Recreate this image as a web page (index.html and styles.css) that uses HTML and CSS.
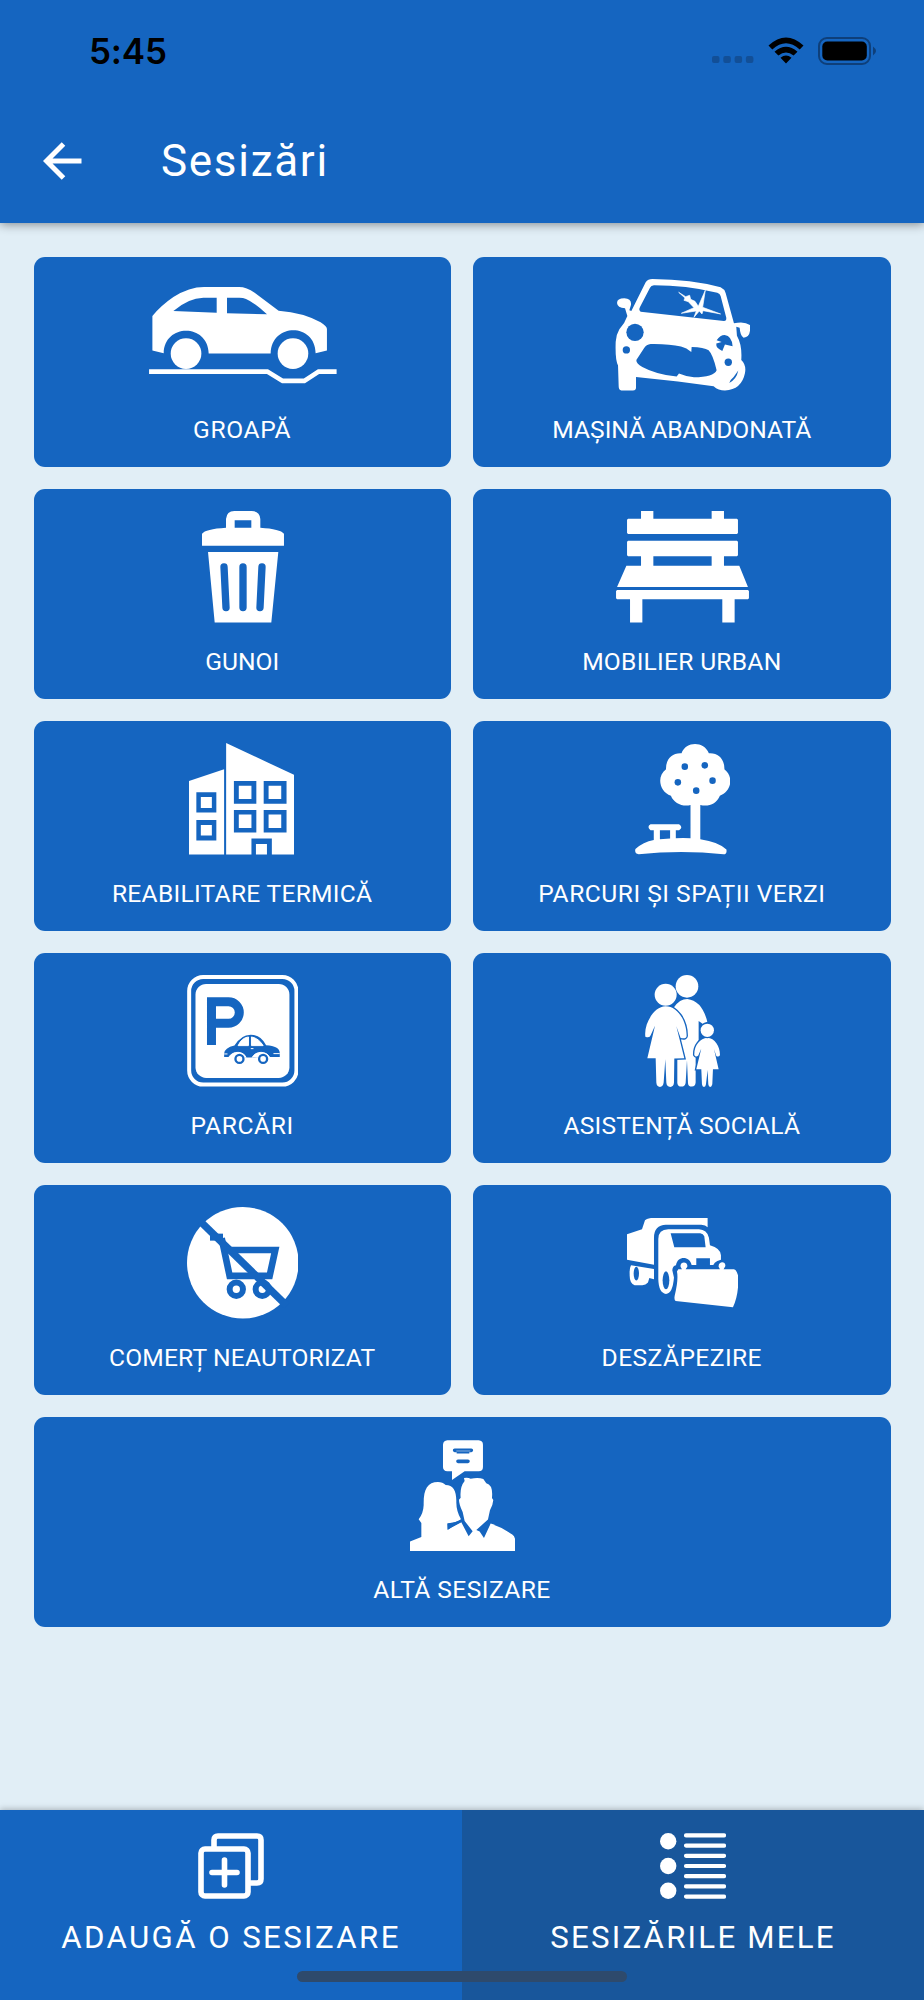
FILE: index.html
```html
<!DOCTYPE html>
<html lang="ro">
<head>
  <meta charset="UTF-8">
  <meta name="viewport" content="width=device-width, initial-scale=1.0">
  <title>Sesizări</title>
  <link rel="stylesheet" href="styles.css">
</head>
<body>
  <header class="header">
    <div class="status-bar">
      <span class="time">5:45</span>
      <div class="status-icons">
        <svg class="signal" viewBox="0 0 42 7"><g fill="#124f97"><rect width="7.5" height="7" rx="2"/><rect x="11.3" width="7.5" height="7" rx="2"/><rect x="22.6" width="7.5" height="7" rx="2"/><rect x="33.9" width="7.5" height="7" rx="2"/></g></svg>
        <svg class="wifi" viewBox="0 0 36 27"><path d="M0.5 8.6Q18-7.6 35.5 8.6L31.7 12.5Q18-0.2 4.3 12.5ZM6.5 14.7Q18 4.6 29.5 14.7L25.6 18.6Q18 12.2 10.4 18.6ZM12.5 20.7Q18 16.2 23.5 20.7L18 26.5Z"/></svg>
        <svg class="battery" viewBox="0 0 59 28"><rect x="1" y="1" width="51" height="26" rx="8" fill="none" stroke="#0e3f7a" stroke-width="2"/><rect x="4.3" y="4.5" width="44.5" height="19" rx="5"/><path d="M55 9.5q6 4.5 0 9z" fill="#0e3f7a"/></svg>
      </div>
    </div>
    <div class="nav-bar">
      <svg class="back" viewBox="0 0 40 38"><path d="M38.5 19H4M20.5 2L3.5 19l17 17" fill="none" stroke="#fff" stroke-width="5"/></svg>
      <h1 class="title">Sesizări</h1>
    </div>
  </header>

  <main class="grid">
    <!-- Pothole -->
    <a class="card">
      <svg class="icon" width="188" viewBox="385 102 564 335">
        <path fill-rule="evenodd" d="M395 317V213Q420 182 458 156Q506 126 550 126H655Q678 126 702 143L774 197Q850 203 900 232Q919 244 919 252V317L885 325C884 233 752 233 750 326H564C562 234 430 235 429 325ZM458 198L588 203V158H548Q503 159 458 198ZM619 158V205L739 208Q700 172 676 162Q668 158 656 158Z"/>
        <circle cx="496" cy="326" r="46"/><circle cx="817" cy="326" r="46"/>
        <path d="M385 380H740L786 408H851L894 380H948" fill="none" stroke="#fff" stroke-width="14"/>
      </svg>
      <span class="label l1">GROAPĂ</span>
    </a>
    <!-- Wrecked car -->
    <a class="card">
      <svg class="icon" width="135.3" viewBox="448 102 406 335">
        <path d="M540 112Q547 102 560 102Q680 103 765 127Q776 132 780 144L805 235Q836 228 853 240Q857 276 834 278Q824 273 822 248L812 245L814 272Q830 300 827 345Q843 360 838 385Q828 434 778 437Q758 437 744 424L637 410L511 396V430Q510 437 502 437H467Q459 436 459 425L457 362Q448 345 450 290Q451 270 461 253Q478 234 485 213L478 190Q455 188 454 174Q454 160 476 160Q498 161 496 179L491 196L497 198Z"/>
        <g fill="#1565c0">
          <path d="M553 128Q556 122 565 121Q660 121 755 143Q763 145 765 153L782 218Q783 228 775 228L525 200Q518 196 523 186Z"/>
          <circle cx="508" cy="262" r="26"/><circle cx="482" cy="315" r="11"/><circle cx="788" cy="352" r="11"/>
          <path d="M512 345L535 310Q542 298 555 297Q610 296 646 305Q663 309 677 321L678 306Q715 307 729 316Q742 329 753 376Q744 397 685 397Q660 395 640 386L633 395Q570 388 530 366Q511 355 512 345ZM753 286Q764 270 777 270Q799 273 801 304L778 299L770 318Q750 310 752 296L768 291ZM818 377Q813 403 791 414Q793 405 804 396Z"/>
        </g>
        <path d="M639 142L660 155L672 151L675 163L688 169L698 184L719 136L711 187L765 207L712 197L709 207L701 198L685 217L692 198L647 205L685 188L668 170L655 166L658 159Z" stroke="#fff" stroke-width="2"/>
      </svg>
      <span class="label">MAȘINĂ ABANDONATĂ</span>
    </a>
    <!-- Trash can -->
    <a class="card">
      <svg class="icon" width="82" viewBox="543 94 246 335">
        <path fill-rule="evenodd" d="M543 198V162Q553 148 615 144V118Q617 94 640 94H692Q716 94 718 118V144Q778 148 789 162V198ZM641 122V144H691V122ZM561 217H772L751 429H581Z"/>
        <path d="M609 262L615 384M666 262V384M723 262L717 384" stroke="#1565c0" stroke-width="22" stroke-linecap="round"/>
      </svg>
      <span class="label">GUNOI</span>
    </a>
    <!-- Bench -->
    <a class="card">
      <svg class="icon" width="133" viewBox="452 94 399 335">
        <path d="M527 94H564V117H739V94H776V117H815L818 120V160L815 163H488L485 160V120L488 117H527ZM488 183H815L818 186V227L815 230H776V258H822L848 322H455L483 258H527V230H488L485 227V186ZM455 331H848L851 334V356L848 359H808V429H771V359H531V429H494V359H455L452 356V334Z"/>
        <path d="M564 230H739V258H564Z" fill="#1565c0"/>
      </svg>
      <span class="label l4">MOBILIER URBAN</span>
    </a>
    <!-- Buildings -->
    <a class="card">
      <svg class="icon building" width="105.3" viewBox="96 84 258 335" preserveAspectRatio="none">
        <path fill-rule="evenodd" d="M96 198L182 163V419H96ZM187 84L354 180V419H299V371H249V419H187ZM114 232V293H163V232ZM114 315V377H163V315ZM206 198V266H261V198ZM279 198V266H335V198ZM206 285V353H261V285ZM279 285V353H335V285Z"/>
        <path d="M125 246h27v33h-27zM125 330h27v32h-27zM218 212h31v40h-31zM291 212h31v40h-31zM218 299h31v40h-31zM291 299h31v40h-31zM260 387h27v32h-27z"/>
      </svg>
      <span class="label l5">REABILITARE TERMICĂ</span>
    </a>
    <!-- Tree -->
    <a class="card">
      <svg class="icon" width="95.5" viewBox="1186 84 234 335" preserveAspectRatio="none">
        <path fill-rule="evenodd" d="M1300 115C1311 78 1355 78 1367 115C1392 113 1406 136 1405 163C1429 186 1422 229 1394 242C1386 266 1367 276 1346 270V373Q1391 381 1410 404Q1412 418 1403 418Q1300 404 1195 418Q1184 416 1187 402Q1206 381 1232 375V346H1224Q1214 336 1224 328H1294Q1305 337 1294 346H1286V370Q1304 368 1322 370V270C1302 276 1281 264 1274 242C1246 231 1238 184 1262 163C1261 134 1276 113 1300 115ZM1247 346V373L1272 371V346Z"/>
        <g fill="#1565c0"><ellipse cx="1308" cy="155" rx="8" ry="10"/><ellipse cx="1357" cy="151" rx="8" ry="10"/><ellipse cx="1291" cy="202" rx="8" ry="10"/><ellipse cx="1376" cy="197" rx="8" ry="10"/><ellipse cx="1336" cy="227" rx="8" ry="10"/></g>
      </svg>
      <span class="label l6">PARCURI ȘI SPAȚII VERZI</span>
    </a>
    <!-- Parking sign -->
    <a class="card">
      <svg class="icon" width="111.6" viewBox="111 75 334 335">
        <rect x="117" y="81" width="322" height="323" rx="42" fill="none" stroke="#fff" stroke-width="12"/>
        <rect x="136" y="102" width="282" height="282" rx="32"/>
        <path d="M184 285V155H235A32 32 0 0 1 235 220H196" fill="none" stroke="#1565c0" stroke-width="27"/>
        <path fill="#1565c0" d="M222 311Q223 294 253 287Q272 254 302 254Q333 254 348 286Q388 288 389 309V321H358C350 305 329 305 323 323H286C281 305 258 305 250 321H222Z"/>
        <path d="M264 287Q275 263 295 261V287ZM304 261Q326 265 339 287H304ZM302 296H310M222 312H232M370 311H389M235 323C248 300 282 304 288 323M306 323C316 302 350 302 359 323" stroke="#fff" stroke-width="3"/>
        <path d="M242 323C253 304 280 305 286 323ZM316 323C323 305 349 305 355 323Z"/>
        <g fill="#fff" stroke="#1565c0" stroke-width="7"><circle cx="268" cy="327" r="12"/><circle cx="339" cy="327" r="12"/></g>
      </svg>
      <span class="label l7">PARCĂRI</span>
    </a>
    <!-- Family -->
    <a class="card">
      <svg class="icon" width="75.3" viewBox="134 75 226 335">
        <circle cx="260" cy="109" r="34"/>
        <path d="M221 172Q238 147 261 147Q305 152 321 215L308 222L295 213V285L286 324V398Q285 410 275 410Q263 410 263 399L260 331L256 399Q254 410 243 410Q232 410 231 399V300Z"/>
        <g stroke="#1565c0" stroke-width="8" paint-order="stroke">
          <path d="M196 169C230 169 259 210 259 258Q258 268 241 264L228 229L252 325L222 326L221 398Q220 411 210 411Q199 411 198 398L195 328L190 398Q188 411 179 411Q169 411 168 398L166 325H141L164 227L151 256Q148 265 135 260C130 220 163 168 196 169Z"/>
          <path d="M321 263C344 263 360 291 359 316Q355 322 348 318L341 297L355 358H338L336 403Q334 411 330 411Q325 411 324 403L322 360L317 403Q316 411 311 411Q306 411 305 403L303 358H288L303 296L294 317Q286 323 282 315C281 286 300 264 321 263Z"/>
          <circle cx="321" cy="241" r="20"/>
        </g>
        <circle cx="196" cy="134" r="33"/>
      </svg>
      <span class="label l8">ASISTENȚĂ SOCIALĂ</span>
    </a>
    <!-- Crossed cart -->
    <a class="card">
      <svg class="icon" width="111.6" viewBox="0 0 335 335">
        <circle cx="167.5" cy="167.5" r="167.5"/>
        <g fill="none" stroke="#1565c0">
          <path d="M40 43L300 297" stroke-width="22"/>
          <path d="M104 94L128 207H248L265 129H116" stroke-width="20"/>
          <circle cx="148" cy="247" r="20" stroke-width="18"/><circle cx="226" cy="247" r="20" stroke-width="18"/>
        </g>
        <path d="M69 80H108V101H69Z" fill="#1565c0"/>
      </svg>
      <span class="label l9">COMERȚ NEAUTORIZAT</span>
    </a>
    <!-- Snow plow -->
    <a class="card">
      <svg class="icon" width="111.6" viewBox="34 8 335 335">
        <path d="M34 90L79 75L88 48Q91 44 106 41H276V69Q270 62 257 61H151Q115 62 115 100V181L34 166ZM46 183L115 194V225L101 221L97 235Q90 243 80 243H57Q41 238 42 210Q41 192 46 183Z"/>
        <path fill-rule="evenodd" d="M128 104Q128 76 158 75H250Q274 76 280 100L283 123Q315 132 316 153V166L305 170Q296 175 293 182H283V162H242V182H228C223 154 185 153 181 183Q171 185 170 198L175 220Q171 269 151 269Q129 266 128 225ZM165 87L176 129H270L266 96Q263 88 254 87Z"/>
        <path d="M188 195H199L195 188C191 170 218 170 215 187L210 195H313L309 187C308 170 332 170 329 186L324 195H355Q363 196 368 216Q370 271 352 309L180 290Q175 288 177 275Q189 225 184 202Z"/>
        <ellipse cx="62" cy="208" rx="8" ry="21" fill="#1565c0"/><ellipse cx="151" cy="228" rx="10" ry="27" fill="#1565c0"/>
      </svg>
      <span class="label l10">DESZĂPEZIRE</span>
    </a>
    <!-- People talking -->
    <a class="card wide">
      <svg class="icon" width="105.3" viewBox="178 87 316 335">
        <path d="M290 88H384Q397 89 397 101V168Q397 181 384 181H342L304 207V181H290Q277 180 277 168V101Q278 89 290 88Z"/>
        <path d="M178 420V392L212 378V336L204 325Q218 307 219 282C218 235 230 213 262 213Q276 213 285 222C308 222 318 240 317 274Q317 301 331 325Q317 337 291 338V356L332 334L354 376L366 361L342 330L336 303Q325 280 325 266L330 260Q327 228 342 210L340 201Q352 199 360 203Q384 199 398 204L407 217Q428 222 424 261L428 267Q427 282 418 298L412 326L377 357L387 362L400 381L420 338Q455 349 485 371Q494 378 494 390V420Z"/>
        <path d="M290 338Q312 337 332 326L335 332Q315 340 291 357Z" fill="#1565c0"/>
        <path d="M312 118H362M322 151H352" stroke="#1565c0" stroke-width="11" stroke-linecap="round"/>
        <path d="M318 125H356" stroke="#1565c0" stroke-width="5"/><path d="M317 120H359" stroke="#fff" stroke-width="1.5"/>
      </svg>
      <span class="label l11">ALTĂ SESIZARE</span>
    </a>
  </main>

  <footer class="tabs">
    <a class="tab">
      <svg class="tab-icon" viewBox="0 0 66 66">
        <g fill="none" stroke="#fff" stroke-width="5.6" stroke-linejoin="round" stroke-linecap="round">
          <rect x="3" y="16" width="47" height="47" rx="4"/>
          <path d="M16 14V7q0-4 4-4h39q4 0 4 4v39q0 4-4 4h-6M14 39.5h25M26.5 27v25"/>
        </g>
      </svg>
      <span class="tab-label t1">ADAUGĂ O SESIZARE</span>
    </a>
    <a class="tab active">
      <svg class="tab-icon" viewBox="0 0 66 66">
        <circle cx="8.2" cy="8.3" r="8.2"/><circle cx="8.2" cy="33" r="8.2"/><circle cx="8.2" cy="57.7" r="8.2"/>
        <path d="M26 2.4h38M26 12.6h38M26 22.8h38M26 33h38M26 43.2h38M26 53.4h38M26 63.6h38" stroke="#fff" stroke-width="4.2" stroke-linecap="round"/>
      </svg>
      <span class="tab-label t2">SESIZĂRILE MELE</span>
    </a>
    <div class="home-indicator"></div>
  </footer>
</body>
</html>
```
FILE: styles.css
```css
* {
  box-sizing: border-box;
}
body {
  margin: 0;
  height: 2000px;
  display: flex;
  flex-direction: column;
  background-color: #e1eef6;
  font-family: Roboto, "Noto Sans", sans-serif;
  color: white;
  overflow: hidden;
}
svg {
  display: block;
  flex: none;
  fill: white;
}
.header {
  height: 223px;
  flex: none;
  background-color: #1565c0;
  box-shadow: 0 1px 10px rgba(0, 0, 0, 0.45);
}
.status-bar {
  height: 98px;
  padding: 3px 47px 0 89px;
  display: flex;
  justify-content: space-between;
  align-items: center;
}
.time {
  font: 600 35px Inter, sans-serif;
  letter-spacing: -0.2px;
  color: black;
}
.status-icons {
  display: flex;
  align-items: center;
}
.status-icons svg {
  fill: black;
}
.signal {
  width: 42px;
  height: 7px;
  margin: 18px 14px 0 0;
}
.wifi {
  width: 36px;
  height: 27px;
  margin-right: 14px;
}
.battery {
  width: 59px;
  height: 28px;
}
.nav-bar {
  height: 125px;
  padding: 0 43px;
  display: flex;
  align-items: center;
}
.back {
  width: 40px;
  height: 38px;
}
.title {
  margin: 0 0 0 78px;
  font-size: 44px;
  font-weight: 400;
  line-height: 52px;
  letter-spacing: 1.7px;
}
.grid {
  flex: 1;
  padding: 33.8px 33.5px 0;
  display: grid;
  grid-template-columns: 1fr 1fr;
  grid-auto-rows: 209.8px;
  gap: 22.3px;
  align-content: start;
}
.card {
  padding-top: 22.3px;
  display: flex;
  flex-direction: column;
  align-items: center;
  background-color: #1565c0;
  border-radius: 11px;
}
.wide {
  grid-column: span 2;
}
.icon {
  height: 111.6px;
  margin-left: 1px;
}
.building {
  margin-left: -1px;
}
.label {
  margin-top: 24px;
  font-size: 24.6px;
  line-height: 30px;
  white-space: nowrap;
}
/* per-label tracking */
.l1, .l7 {
  letter-spacing: 0.6px;
}
.l4, .l5 {
  letter-spacing: 0.27px;
}
.l6 {
  letter-spacing: 0.5px;
}
.l8, .l9 {
  letter-spacing: 0.17px;
}
.l10, .l11 {
  letter-spacing: 0.43px;
}
.tabs {
  position: relative;
  height: 190px;
  flex: none;
  display: flex;
  box-shadow: 0 -1px 6px rgba(0, 0, 0, 0.25);
}
.tab {
  flex: 1;
  padding-top: 23px;
  display: flex;
  flex-direction: column;
  align-items: center;
  background-color: #1565c0;
}
.active {
  background-color: #18569b;
}
.tab-icon {
  width: 66px;
  height: 66px;
}
.tab-label {
  margin-top: 19px;
  font-size: 31.2px;
  line-height: 40px;
  white-space: nowrap;
}
.t1 {
  letter-spacing: 2.4px;
}
.t2 {
  letter-spacing: 2.25px;
}
.home-indicator {
  position: absolute;
  left: 297px;
  bottom: 18px;
  width: 330px;
  height: 11px;
  border-radius: 6px;
  background-color: #2e4a6c;
}
```
